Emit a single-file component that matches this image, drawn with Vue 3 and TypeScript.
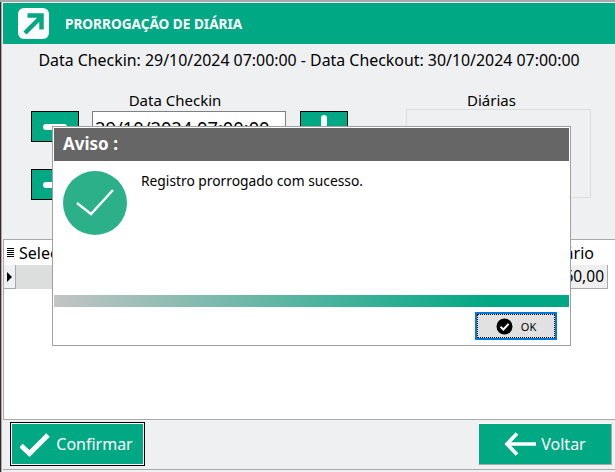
<template>
  <div class="window">
    <!-- cabeçalho -->
    <header class="title-bar">
      <svg class="logo" width="31" height="31" viewBox="0 0 31 31">
        <rect x="0" y="0" width="31" height="31" rx="6" fill="#fff" />
        <path d="M7 25 L22 10 M9.5 7.5 H23.5 V21.5" fill="none" stroke="#00a884" stroke-width="4.5" />
      </svg>
      <h1 class="title">PRORROGAÇÃO DE DIÁRIA</h1>
    </header>

    <main class="content">
      <p class="period">{{ periodText }}</p>

      <section class="form-row">
        <div class="steppers">
          <button v-for="n in 2" :key="n" class="step-button" type="button">
            <span class="dash"></span>
          </button>
        </div>
        <div class="date-field">
          <label class="field-label date-label">Data Checkin</label>
          <div class="date-input">29/10/2024 07:00:00</div>
        </div>
        <button class="step-button step-plus" type="button">
          <span class="bar"></span>
        </button>
        <div class="days-field">
          <label class="field-label days-label">Diárias</label>
          <div class="days-box"></div>
        </div>
      </section>

      <section class="table">
        <div class="table-head">
          <span class="list-icon">
            <i v-for="n in 5" :key="n"></i>
          </span>
          <span class="head-left">Selecionar</span>
          <span class="head-right">Valor Diário</span>
        </div>
        <div class="table-row">
          <span class="row-indicator"><i class="arrow"></i></span>
          <span class="row-fill"></span>
          <span class="row-value">160,00</span>
        </div>
      </section>

      <footer class="actions">
        <button class="action-button confirm" type="button">
          <svg width="36" height="28" viewBox="0 0 36 28">
            <path d="M1 15.5 L9.5 23.5 L28 5" fill="none" stroke="#fff" stroke-width="5" />
          </svg>
          Confirmar
        </button>
        <button class="action-button back" type="button">
          <svg width="34" height="24" viewBox="0 0 34 24">
            <path d="M32 12 H4 M13 1.5 L3 12 L13 22.5" fill="none" stroke="#fff" stroke-width="3.6" />
          </svg>
          Voltar
        </button>
      </footer>
    </main>

    <!-- aviso -->
    <div class="dialog">
      <div class="dialog-title">Aviso :</div>
      <div class="dialog-body">
        <div class="success-icon">
          <svg width="64" height="64" viewBox="0 0 64 64">
            <circle cx="32" cy="32" r="32" fill="#2bb08a" />
            <path d="M14 32 L28 43 L50 19" fill="none" stroke="#fff" stroke-width="2.4" />
          </svg>
        </div>
        <p class="dialog-text">Registro prorrogado com sucesso.</p>
      </div>
      <div class="progress"></div>
      <div class="dialog-footer">
        <button class="ok-button" type="button">
          <span class="ok-inner">
            <svg width="17" height="17" viewBox="0 0 17 17">
              <circle cx="8.5" cy="8.5" r="8" fill="#000" />
              <path d="M4.5 8.8 L7.4 11.5 L12.6 5.8" fill="none" stroke="#fff" stroke-width="2" />
            </svg>
            <span>OK</span>
          </span>
        </button>
      </div>
    </div>
  </div>
</template>

<script setup lang="ts">
const checkin = '29/10/2024 07:00:00'
const checkout = '30/10/2024 07:00:00'
const periodText = `Data Checkin: ${checkin} - Data Checkout: ${checkout}`
</script>

<style>
html,
body {
  margin: 0;
  background: #eff0f2;
}
</style>

<style scoped>
.window {
  position: relative;
  display: flex;
  flex-direction: column;
  box-sizing: border-box;
  width: 615px;
  height: 472px;
  overflow: hidden;
  padding: 3px 0 2px 3px;
  background: #eff0f2;
  box-shadow: inset 0 2px 0 #a9a9a9, inset 1px 0 0 #3a2a28, inset 2px 0 0 #a9a9a9;
  font-family: "Noto Sans", Tahoma, sans-serif;
  color: #000;
}

.title-bar {
  display: flex;
  align-items: center;
  gap: 16px;
  height: 41px;
  padding-left: 15px;
  background: #00a884;
}

.logo {
  display: block;
}

.title {
  margin: 0;
  font-size: 13.6px;
  font-weight: 700;
  color: #fff;
}

.content {
  display: flex;
  flex: 1;
  flex-direction: column;
  min-height: 0;
}

.period {
  margin: 0;
  padding-top: 6px;
  height: 23px;
  font-size: 15.9px;
  line-height: 20px;
  text-align: center;
  white-space: nowrap;
}

.form-row {
  display: flex;
  align-items: flex-start;
  height: 166px;
  padding-top: 17px;
  padding-left: 28px;
  box-sizing: border-box;
}

.steppers {
  display: flex;
  flex-direction: column;
  gap: 27px;
  padding-top: 21px;
  margin-right: 13px;
}

.step-button {
  display: flex;
  align-items: center;
  justify-content: center;
  box-sizing: border-box;
  width: 48px;
  height: 31px;
  padding: 0;
  border: 1px solid #000;
  background: #00a884;
}

.dash {
  display: block;
  width: 24px;
  height: 6px;
  border-radius: 3px;
  background: #fff;
}

.step-plus {
  align-self: flex-start;
  margin-top: 21px;
  margin-left: 14px;
  margin-right: 58px;
}

.bar {
  display: block;
  width: 6px;
  height: 24px;
  border-radius: 3px;
  background: #fff;
}

.date-field {
  width: 194px;
}

.field-label {
  display: block;
  height: 21px;
  font-size: 15px;
  line-height: 20px;
  text-align: center;
}

.date-label {
  padding-right: 28px;
}

.days-label {
  padding-right: 14px;
}

.date-input {
  box-sizing: border-box;
  height: 30px;
  padding: 6px 2px 0;
  border: 1px solid #808080;
  background: #fff;
  font-size: 18.3px;
  line-height: 20px;
  white-space: nowrap;
  overflow: hidden;
}

.days-field {
  width: 185px;
}

.days-box {
  box-sizing: border-box;
  height: 89px;
  margin-top: -2px;
  border: 1px solid #dcdcdc;
}

.table {
  flex: 1;
  min-height: 0;
  border-top: 1px solid #a9a9a9;
  border-left: 1px solid #a9a9a9;
  border-bottom: 1px solid #a9a9a9;
  background: #fff;
}

.table-head {
  display: flex;
  align-items: center;
  height: 25px;
  font-size: 16px;
}

.list-icon {
  display: flex;
  flex-direction: column;
  gap: 1px;
  width: 7px;
  margin: 0 5px 0 3px;
}

.list-icon i {
  display: block;
  height: 1px;
  background: #000;
}

.head-left {
  flex: 1;
}

.head-right {
  padding-right: 21px;
  white-space: nowrap;
}

.table-row {
  display: flex;
  height: 24px;
}

.row-indicator {
  display: flex;
  align-items: center;
  box-sizing: border-box;
  width: 12px;
  padding-left: 3px;
  background: #eff0f2;
  border-right: 1px solid #a9a9a9;
  border-bottom: 1px solid #a9a9a9;
}

.arrow {
  width: 0;
  height: 0;
  border-top: 5px solid transparent;
  border-bottom: 5px solid transparent;
  border-left: 5px solid #000;
}

.row-fill {
  flex: 1;
  background: #dcdddd;
}

.row-value {
  box-sizing: border-box;
  width: 88px;
  margin-right: 7px;
  padding-right: 3px;
  border-right: 1px solid #a9a9a9;
  border-bottom: 1px solid #a9a9a9;
  background: #efefef;
  font-size: 15.5px;
  line-height: 22px;
  text-align: right;
}

.actions {
  display: flex;
  align-items: flex-start;
  justify-content: space-between;
  height: 50px;
  padding: 3px 3px 0 8px;
  box-sizing: border-box;
  border-bottom: 1px solid #a9a9a9;
}

.action-button {
  display: flex;
  align-items: center;
  justify-content: center;
  box-sizing: border-box;
  height: 42px;
  padding: 0;
  color: #fff;
  background: #00a884;
  font-family: inherit;
  font-size: 16px;
}

.confirm {
  width: 133px;
  padding-right: 2px;
  border: 1px solid #fff;
  outline: 1px solid #000;
}

.back {
  width: 134px;
  gap: 3px;
  border: 1px solid #fff;
  border-right-color: #a9a9a9;
  border-bottom-color: #a9a9a9;
}

.dialog {
  position: absolute;
  left: 52px;
  top: 126px;
  box-sizing: border-box;
  display: flex;
  flex-direction: column;
  width: 519px;
  height: 220px;
  padding: 1px 1px 0 1px;
  border: 1px solid #a0a0a0;
  background: #fff;
}

.dialog-title {
  height: 33px;
  padding-left: 9px;
  background: #666;
  color: #fff;
  font-size: 17px;
  font-weight: 700;
  line-height: 31px;
}

.dialog-body {
  display: flex;
  flex: 1;
}

.success-icon {
  padding: 10px 0 0 9px;
}

.dialog-text {
  margin: 0;
  padding: 12px 0 0 14px;
  font-size: 13.8px;
  line-height: 16px;
}

.progress {
  height: 12px;
  background: linear-gradient(to right, #c4c4c4, #00a884 85%);
}

.dialog-footer {
  display: flex;
  justify-content: flex-end;
  height: 38px;
  padding: 5px 12px 0 0;
  box-sizing: border-box;
}

.ok-button {
  box-sizing: border-box;
  width: 82px;
  height: 28px;
  padding: 0;
  border: 2px solid #0078d7;
  background: #e1e1e1;
  font-family: inherit;
}

.ok-inner {
  display: flex;
  align-items: center;
  justify-content: center;
  gap: 8px;
  height: 100%;
  box-sizing: border-box;
  border: 1px dotted #000;
  font-size: 11px;
  color: #000;
}
</style>
